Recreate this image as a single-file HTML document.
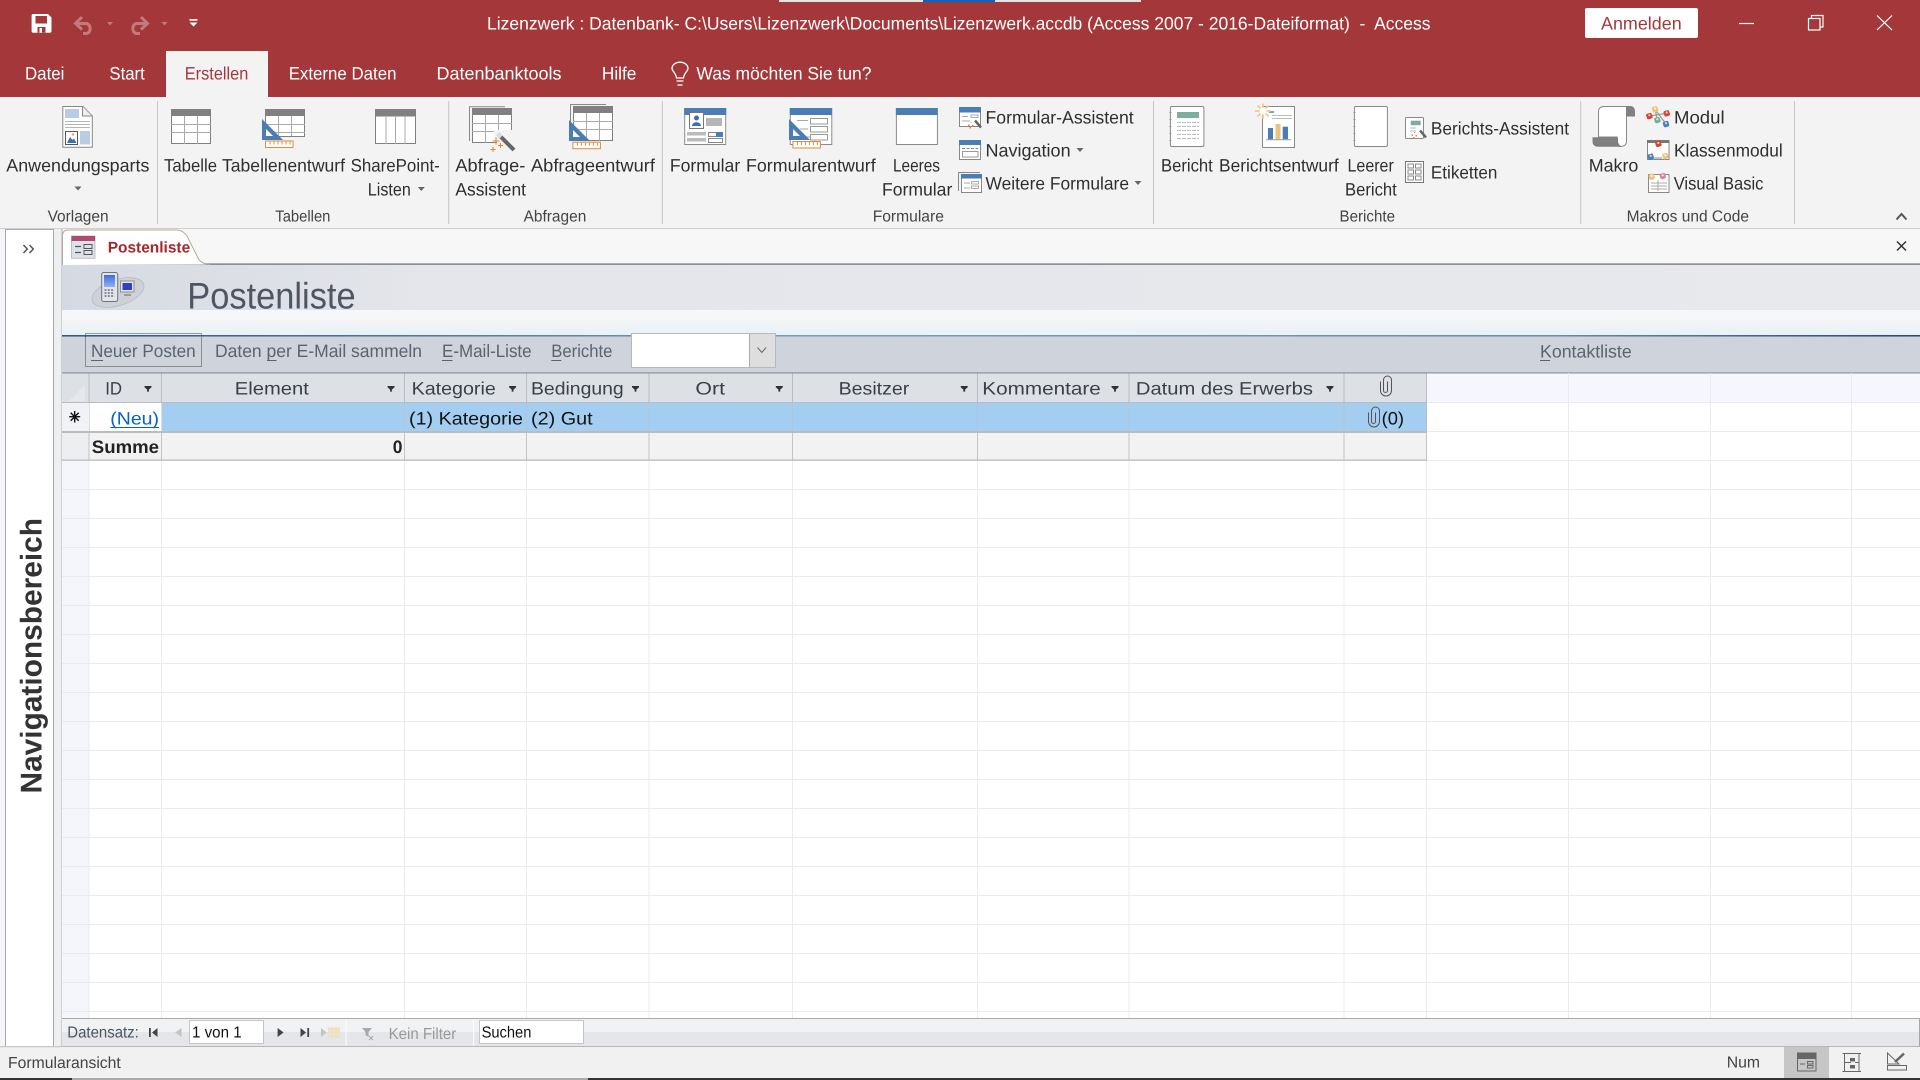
<!DOCTYPE html>
<html lang="de"><head><meta charset="utf-8"><title>Lizenzwerk</title>
<style>
html,body{margin:0;padding:0;background:#f3f3f3;width:1920px;height:1080px;overflow:hidden}
svg{display:block}
text{font-family:"Liberation Sans",sans-serif;text-rendering:geometricPrecision}
.w{fill:#fff;font-size:18px;transform:translateY(-.5px)}
.r{fill:#2e2e2e;font-size:18px;transform:translateY(-.5px)}
.g{fill:#444;font-size:16px;transform:translateY(-.5px)}
.t{fill:#5a6370;font-size:18px;transform:translateY(-.5px)}
.h{fill:#3a3f46;font-size:18px;transform:translateY(-.5px)}
.c{fill:#111;font-size:18px;transform:translateY(-.5px)}
</style></head><body>
<svg xmlns="http://www.w3.org/2000/svg" width="1920" height="1080" viewBox="0 0 1920 1080">
<defs>
<linearGradient id="hd" x1="0" x2="1" y1="0" y2="0"><stop offset="0" stop-color="#d5d9e1"/><stop offset=".2" stop-color="#e4e6eb"/><stop offset="1" stop-color="#e8e9ed"/></linearGradient>
<linearGradient id="bd" x1="0" x2="0" y1="0" y2="1"><stop offset="0" stop-color="#f3f4f6"/><stop offset="1" stop-color="#e8f2f8"/></linearGradient>
<linearGradient id="ln" x1="0" x2="1" y1="0" y2="0"><stop offset="0" stop-color="#2a5888"/><stop offset=".4" stop-color="#7e9aba"/><stop offset=".8" stop-color="#6e8aae"/><stop offset="1" stop-color="#1e4a80"/></linearGradient>
<linearGradient id="sc" x1="0" x2="0" y1="0" y2="1"><stop offset="0" stop-color="#3f6fe0"/><stop offset="1" stop-color="#8fb0f0"/></linearGradient>
<g id="f"><path d="M-3.500-2.500h7v1.300l-2.600 2.300v2h-1.800v-2l-2.600-2.300z" fill="#333"/></g>
<g id="a"><path d="M-3.500-2h7l-3.500 4z" fill="#666"/></g>
<g id="tri"><path d="M0 0V21H21Z" fill="#4a7db5"/><path d="M4 10V17H11Z" fill="#fff"/></g>
<g id="rul"><rect x=".5" y=".5" width="27.500" height="6.500" fill="#fff" stroke="#e08b3a"/><path d="M5 1v3M9 1v3M13 1v3M17 1v3M21 1v3M25 1v3" stroke="#e08b3a"/></g>
<g id="tb"><rect x=".5" y=".5" width="39" height="34" fill="#fff" stroke="#808080"/><rect width="40" height="7" fill="#808080"/><path d="M0 15.500H40M0 23.500H40M13.500 7V35M26.500 7V35" stroke="#aaa" fill="none"/></g>
<g id="cl"><path d="M1.500 6V15a5.500 5.500 0 0 0 11 0V4.500a4 4 0 0 0-8 0V15a2 2 0 0 0 4 0V6" fill="none" stroke="#555" stroke-width="1"/></g>
<g id="wd"><path d="M0 0L6 7" stroke="#666" stroke-width="2.500"/></g>
<g id="dot"><path d="M0 0h1v1h-1zM-2.500 2.500h1.500v1.500h-1.500zM1.500 3h1.500v1.500h-1.500zM-1 5h1.500v1.500h-1.500z" fill="#e8842c"/></g>
<g id="cu"><rect x="-2.900" y="-2.800" width="5.800" height="5.800" rx="1.700" transform="rotate(-18)" fill="currentColor"/><circle cx="0" cy="-.8" r="1.100" fill="#fff" opacity=".75"/></g>
</defs>

<!-- base -->
<rect width="1920" height="1080" fill="#f3f3f3"/>
<rect width="1920" height="97" fill="#a4373a"/>
<rect x="779" y="0" width="362" height="2" fill="#e2e2e2"/><rect x="923" y="0" width="72" height="2" fill="#0a66c2"/>

<!-- QAT -->
<path d="M33 14H48L51.500 17.500V31a1.700 1.700 0 0 1-1.700 1.700H33.300A1.700 1.700 0 0 1 31.600 31V15.500A1.500 1.500 0 0 1 33 14Z" fill="#fff"/>
<rect x="35.500" y="16" width="11.500" height="7.500" fill="#a4373a"/><rect x="37.500" y="27" width="8" height="5.700" fill="#a4373a"/><rect x="39.500" y="28" width="2.500" height="4.700" fill="#fff"/>
<g fill="none" stroke="#c27a7c" stroke-width="3"><path d="M82 17L75.500 23.500L82 29.500M76 23.500H87a5.500 5.500 0 0 1 0 10H83"/><path d="M141 17L147.500 23.500L141 29.500M147 23.500H136a5.500 5.500 0 0 0 0 10H140"/></g>
<path d="M107 22h6l-3 3.500zM161.500 22h6l-3 3.500z" fill="#c27a7c"/>
<rect x="189.500" y="19" width="8" height="1.700" fill="#fff"/><path d="M189.500 22.500h8l-4 4z" fill="#fff"/>

<!-- Title -->
<text class="w" x="487" y="30" textLength="943.500" lengthAdjust="spacingAndGlyphs" xml:space="preserve">Lizenzwerk : Datenbank- C:\Users\Lizenzwerk\Documents\Lizenzwerk.accdb (Access 2007 - 2016-Dateiformat)  -  Access</text>
<rect x="1585" y="8" width="113" height="30" rx="2" fill="#fff"/>
<text x="1601" y="29.500" textLength="80.700" lengthAdjust="spacingAndGlyphs" style="font-size:18px;fill:#a4373a">Anmelden</text>
<g stroke="#fff" stroke-width="1.200" fill="none"><path d="M1739 23.500H1754"/><rect x="1808.500" y="18.500" width="11.500" height="11.500"/><path d="M1811.500 18V15.500H1823V27H1820.500"/><path d="M1877 15.500L1892 30M1892 15.500L1877 30"/></g>

<!-- Tabs -->
<rect x="166" y="51" width="102" height="46" fill="#f3f3f3"/>
<text class="w" x="25" y="80" textLength="39.400" lengthAdjust="spacingAndGlyphs">Datei</text>
<text class="w" x="109.400" y="80" textLength="35.400" lengthAdjust="spacingAndGlyphs">Start</text>
<text x="184.800" y="79.500" textLength="63.500" lengthAdjust="spacingAndGlyphs" style="font-size:18px;fill:#a4373a">Erstellen</text>
<text class="w" x="288.700" y="80" textLength="107.800" lengthAdjust="spacingAndGlyphs">Externe Daten</text>
<text class="w" x="436.500" y="80" textLength="125" lengthAdjust="spacingAndGlyphs">Datenbanktools</text>
<text class="w" x="601.900" y="80" textLength="34.500" lengthAdjust="spacingAndGlyphs">Hilfe</text>
<path d="M676.500 78C676 73 672 71 672 68.500a8 6.300 0 0 1 16 0C688 71 684 73 683.500 78ZM676.500 81H683.500M677.500 85H682.500" fill="none" stroke="#fff" stroke-width="1.300"/>
<text class="w" x="696.400" y="80" textLength="175.100" lengthAdjust="spacingAndGlyphs">Was möchten Sie tun?</text>

<!-- Ribbon separators -->
<path d="M157.500 101V224M448.700 101V224M662.300 101V224M1153.500 101V224M1580.700 101V224M1794.500 101V224" stroke="#c8c8c8" stroke-width="1.100"/>
<rect x="0" y="228" width="1920" height="1.500" fill="#d0d0d0"/>

<!-- Ribbon text -->
<text class="r" x="6.300" y="172" textLength="143.100" lengthAdjust="spacingAndGlyphs">Anwendungsparts</text>
<use href="#a" x="78" y="188.500"/>
<text class="r" x="164" y="172" textLength="53" lengthAdjust="spacingAndGlyphs">Tabelle</text>
<text class="r" x="222" y="172" textLength="123" lengthAdjust="spacingAndGlyphs">Tabellenentwurf</text>
<text class="r" x="350.600" y="172" textLength="89.200" lengthAdjust="spacingAndGlyphs">SharePoint-</text>
<text class="r" x="367.800" y="196" textLength="43" lengthAdjust="spacingAndGlyphs">Listen</text>
<use href="#a" x="421.300" y="189"/>
<text class="r" x="455.400" y="172" textLength="69.900" lengthAdjust="spacingAndGlyphs">Abfrage-</text>
<text class="r" x="455.400" y="196" textLength="70.600" lengthAdjust="spacingAndGlyphs">Assistent</text>
<text class="r" x="531" y="172" textLength="123.900" lengthAdjust="spacingAndGlyphs">Abfrageentwurf</text>
<text class="r" x="669.900" y="172" textLength="70.300" lengthAdjust="spacingAndGlyphs">Formular</text>
<text class="r" x="746" y="172" textLength="129.700" lengthAdjust="spacingAndGlyphs">Formularentwurf</text>
<text class="r" x="893" y="172" textLength="47" lengthAdjust="spacingAndGlyphs">Leeres</text>
<text class="r" x="882" y="196" textLength="70.300" lengthAdjust="spacingAndGlyphs">Formular</text>
<text class="r" x="985.500" y="124" textLength="148.200" lengthAdjust="spacingAndGlyphs">Formular-Assistent</text>
<text class="r" x="985.500" y="157" textLength="85.100" lengthAdjust="spacingAndGlyphs">Navigation</text>
<use href="#a" x="1080" y="150"/>
<text class="r" x="985.500" y="190" textLength="143.500" lengthAdjust="spacingAndGlyphs">Weitere Formulare</text>
<use href="#a" x="1138" y="183"/>
<text class="r" x="1161" y="172" textLength="51.800" lengthAdjust="spacingAndGlyphs">Bericht</text>
<text class="r" x="1219" y="172" textLength="119.700" lengthAdjust="spacingAndGlyphs">Berichtsentwurf</text>
<text class="r" x="1347.500" y="172" textLength="46.300" lengthAdjust="spacingAndGlyphs">Leerer</text>
<text class="r" x="1345" y="196" textLength="51.800" lengthAdjust="spacingAndGlyphs">Bericht</text>
<text class="r" x="1430.900" y="135" textLength="138.100" lengthAdjust="spacingAndGlyphs">Berichts-Assistent</text>
<text class="r" x="1430.900" y="179" textLength="66.500" lengthAdjust="spacingAndGlyphs">Etiketten</text>
<text class="r" x="1588.700" y="172" textLength="49.700" lengthAdjust="spacingAndGlyphs">Makro</text>
<text class="r" x="1674" y="124" textLength="50.600" lengthAdjust="spacingAndGlyphs">Modul</text>
<text class="r" x="1674" y="157" textLength="108.700" lengthAdjust="spacingAndGlyphs">Klassenmodul</text>
<text class="r" x="1673.700" y="190" textLength="89.700" lengthAdjust="spacingAndGlyphs">Visual Basic</text>
<text class="g" x="47.600" y="222" textLength="61" lengthAdjust="spacingAndGlyphs">Vorlagen</text>
<text class="g" x="275.300" y="222" textLength="55.100" lengthAdjust="spacingAndGlyphs">Tabellen</text>
<text class="g" x="523.600" y="222" textLength="62.700" lengthAdjust="spacingAndGlyphs">Abfragen</text>
<text class="g" x="872.700" y="222" textLength="71.200" lengthAdjust="spacingAndGlyphs">Formulare</text>
<text class="g" x="1339.500" y="222" textLength="55.500" lengthAdjust="spacingAndGlyphs">Berichte</text>
<text class="g" x="1626.600" y="222" textLength="122.400" lengthAdjust="spacingAndGlyphs">Makros und Code</text>
<path d="M1896.500 219.500L1901.500 214L1906.500 219.500" fill="none" stroke="#555" stroke-width="2"/>

<!-- Ribbon icons -->
<!-- Anwendungsparts -->
<path d="M62.800 106.500H83L92.300 116V147.300H62.800Z" fill="#fff" stroke="#888"/><path d="M82.500 106.500V116H92" fill="#eee" stroke="#888"/>
<rect x="65" y="109" width="14" height="9" fill="#b8cde4"/><path d="M65 121.500H90M65 124.500H90M65 127.500H90" stroke="#b5b5b5"/>
<rect x="80" y="131" width="10" height="13.500" fill="#b8cde4"/><rect x="65.500" y="131.500" width="12" height="13" fill="#fff" stroke="#555"/><path d="M67 143L70 137L72.500 140L74 138.500L76.500 143Z" fill="#3f6fa6"/><circle cx="73" cy="134.500" r="1.200" fill="#eba94f"/>
<!-- Tabelle -->
<use href="#tb" x="171" y="109"/>
<!-- Tabellenentwurf -->
<use href="#tb" x="265" y="109"/><rect x="264" y="137" width="42" height="8" fill="#f3f3f3"/><path d="M265.500 136.500H304.500" stroke="#808080"/>
<use href="#tri" x="262" y="119"/><use href="#rul" x="265" y="140.500"/>
<!-- SharePoint -->
<rect x="375.500" y="109.500" width="40" height="34" fill="#fff" stroke="#808080"/><rect x="375" y="109" width="41" height="7.500" fill="#808080"/><path d="M386 116V144M395.500 116V144M405 116V144" stroke="#aaa"/>
<!-- Abfrage-Assistent -->
<path d="M469.500 141V106.800H505" fill="none" stroke="#888"/><use href="#tb" x="472" y="108"/>
<rect x="494" y="130" width="20" height="14" fill="#f3f3f3"/><path d="M494 142.500H497" stroke="#808080"/>
<path d="M498 134L514 150" stroke="#666" stroke-width="4"/><path d="M498 134L501 137" stroke="#ddd" stroke-width="4"/>
<path d="M496 137.500v7M492.500 141h7M500.500 143v5M498 145.500h5M493 147v5M490.500 149.500h5" stroke="#e8842c"/>
<!-- Abfrageentwurf -->
<path d="M570.500 125V104.500H606" fill="none" stroke="#888"/><use href="#tb" x="573" y="106"/>
<use href="#tri" x="569" y="120"/><use href="#rul" x="572.400" y="141.700"/>
<!-- Formular -->
<rect x="684.700" y="108.500" width="41" height="36" fill="#fff" stroke="#8a8a8a"/><rect x="684.200" y="108" width="42" height="7" fill="#4a7db5"/>
<rect x="689.500" y="112.500" width="14" height="16" fill="#fff" stroke="#777"/><circle cx="696.500" cy="118" r="2.500" fill="#3f6fa6"/><path d="M692 126c0-5 9-5 9 0z" fill="#3f6fa6"/>
<rect x="706" y="118" width="16" height="8" fill="#b5b5b5"/><rect x="687" y="132" width="19" height="3.500" fill="#bbb"/><rect x="687" y="138" width="19" height="3.500" fill="#bbb"/>
<rect x="708.500" y="132.500" width="14" height="4" fill="#fff" stroke="#888"/><rect x="716" y="132" width="7" height="5" fill="#4a7db5"/><rect x="708.500" y="138.500" width="14" height="4" fill="#fff" stroke="#888"/>
<!-- Formularentwurf -->
<rect x="790.300" y="108.500" width="41.500" height="36" fill="#fff" stroke="#8a8a8a"/><rect x="789.800" y="108" width="42.200" height="7" fill="#4a7db5"/>
<path d="M797 120.500H808M800 129H808M806 137H812" stroke="#aaa"/><rect x="810.500" y="118.500" width="17" height="5.500" fill="#fff" stroke="#999"/><rect x="810.500" y="126.500" width="17" height="5.500" fill="#fff" stroke="#999"/><rect x="810.500" y="134.500" width="17" height="5.500" fill="#fff" stroke="#999"/>
<use href="#tri" x="789" y="119"/><use href="#rul" x="792.400" y="141"/>
<!-- Leeres -->
<rect x="896.400" y="108.500" width="41" height="36" fill="#fff" stroke="#8a8a8a"/><rect x="895.900" y="108" width="41.800" height="7" fill="#4a7db5"/>
<!-- Formular-Assistent small -->
<rect x="959.500" y="107.500" width="21" height="19" fill="#fff" stroke="#888"/><rect x="959" y="107" width="22" height="5.500" fill="#4a7db5"/>
<path d="M962 116.500H968M962 121H970" stroke="#aaa"/><rect x="971" y="115" width="7" height="2.500" fill="#fff" stroke="#999" stroke-width=".8"/>
<use href="#wd" x="975" y="120.500"/><use href="#dot" x="970.500" y="122"/>
<!-- Navigation small -->
<rect x="959.500" y="140.500" width="21" height="19" fill="#fff" stroke="#888"/><rect x="959" y="140" width="22" height="5" fill="#4a7db5"/>
<path d="M962 148.500H978" stroke="#888" stroke-dasharray="3 1.500"/><rect x="962.500" y="151.500" width="15.500" height="5.500" fill="#fff" stroke="#999"/>
<!-- Weitere small -->
<path d="M958.500 191V172.500H980" fill="none" stroke="#888"/><rect x="961.500" y="174.500" width="20" height="18" fill="#fff" stroke="#888"/><rect x="961" y="174" width="21" height="4.500" fill="#4a7db5"/>
<path d="M964 183H970M964 188H970" stroke="#aaa"/><rect x="971.500" y="181.500" width="7" height="2.500" fill="#fff" stroke="#999" stroke-width=".8"/><rect x="971.500" y="186" width="7" height="2.500" fill="#fff" stroke="#999" stroke-width=".8"/>
<!-- Bericht -->
<rect x="1170.400" y="106.500" width="33.500" height="40" rx="1.500" fill="#fff" stroke="#888"/><rect x="1177" y="112" width="22" height="6" fill="#7fad9c"/>
<path d="M1177 122.500H1199M1177 126.500H1199M1177 130.500H1199M1177 134.500H1199M1177 138.500H1199" stroke="#bbb" stroke-dasharray="4 1"/>
<path d="M1170.500 112v.5M1170.500 119v.5M1170.500 126v.5M1170.500 133v.5M1170.500 140v.5" stroke="#999" stroke-width="3"/>
<!-- Berichtsentwurf -->
<rect x="1262.500" y="106.500" width="32" height="41" fill="#fff" stroke="#888"/>
<path d="M1269 112H1274" stroke="#4a7db5" stroke-width="1.500"/><path d="M1272 115.500H1292M1272 118.500H1292" stroke="#bbb"/>
<rect x="1268" y="128" width="5" height="11.300" fill="#4a7db5"/><rect x="1275.500" y="124" width="5" height="15.300" fill="#eac37e"/><rect x="1282.700" y="126.700" width="5.300" height="12.600" fill="#4a7db5"/><path d="M1266 139.700H1291" stroke="#999"/>
<path d="M1263 103.500V119M1255 111H1271M1257.500 105.500L1268.500 116.500M1268.500 105.500L1257.500 116.500" stroke="#efc98f" stroke-width="1.700"/><circle cx="1263" cy="111" r="3.500" fill="#fff"/>
<!-- Leerer -->
<rect x="1354.400" y="106.500" width="33" height="40" rx="1.500" fill="#fff" stroke="#888"/>
<path d="M1354.500 112v.5M1354.500 119v.5M1354.500 126v.5M1354.500 133v.5M1354.500 140v.5" stroke="#999" stroke-width="3"/>
<!-- Berichts-Assistent -->
<rect x="1405.500" y="117.500" width="18" height="21" rx="1" fill="#fff" stroke="#888"/><rect x="1410.700" y="120.700" width="10" height="4.500" fill="#7fad9c"/><path d="M1410 128H1416M1410 131H1416" stroke="#bbb"/>
<use href="#wd" x="1420" y="130.500"/><use href="#dot" x="1414" y="132"/>
<!-- Etiketten -->
<rect x="1405.500" y="161.500" width="18" height="21" fill="#fff" stroke="#777"/>
<g fill="none" stroke="#888"><rect x="1408" y="164" width="5.500" height="4"/><rect x="1415.500" y="164" width="5.500" height="4"/><rect x="1408" y="170" width="5.500" height="4"/><rect x="1415.500" y="170" width="5.500" height="4"/><rect x="1408" y="176" width="5.500" height="4"/><rect x="1415.500" y="176" width="5.500" height="4"/></g>
<!-- Makro -->
<path d="M1598.500 137V112Q1598.500 106.500 1604 106.500H1631Q1626.500 106.500 1626.500 112V141Q1626.500 146.500 1620 146.500Q1618.500 146.500 1617 146V137Z" fill="#fff" stroke="#888"/>
<path d="M1626 106H1630Q1635 106 1635 112V116.500H1626Z" fill="#808080"/>
<path d="M1592.500 137.300H1618V141Q1618 145 1622 146.700H1598Q1592.500 146.700 1592.500 141Z" fill="#808080"/>
<!-- Modul -->
<path d="M1655 109.300L1666 124M1649.300 116L1666.700 113.300M1657.300 120L1655 109.300" stroke="#999" stroke-width="1.200"/>
<use href="#cu" x="1655" y="109.300" color="#eac37e"/><use href="#cu" x="1649.300" y="116" color="#d8432c"/><use href="#cu" x="1666.700" y="113.300" color="#d8432c"/><use href="#cu" x="1657.300" y="120" color="#6fb29a"/><use href="#cu" x="1666" y="124" color="#4a7db5"/>
<!-- Klassen -->
<rect x="1647.500" y="140.500" width="21.500" height="19" fill="#fff" stroke="#888"/><rect x="1647" y="140" width="22.500" height="3" fill="#777"/><path d="M1654 158H1662" stroke="#888"/>
<use href="#cu" x="1658.300" y="143.800" color="#d8432c"/><use href="#cu" x="1650.700" y="156.700" color="#4a7db5"/><use href="#cu" x="1665.300" y="156" color="#eac37e"/>
<!-- VB -->
<rect x="1648.500" y="174.500" width="20.500" height="18" fill="#fff" stroke="#888"/><path d="M1651 183H1667M1651 186H1667M1651 189H1667M1658 180V191" stroke="#aaa"/>
<use href="#cu" x="1651.700" y="176.700" color="#eac37e"/><use href="#cu" x="1662.700" y="176" color="#e87ea0"/>

<!-- Tab strip -->
<rect x="0" y="229" width="1920" height="851" fill="#f7f7f7"/>
<rect x="0" y="229" width="5" height="820" fill="#f5f5f7"/>
<rect x="5.500" y="229.500" width="48" height="817" fill="#fff" stroke="#a8a8b0"/>
<rect x="54" y="229" width="8" height="819" fill="#eeeff1"/><rect x="61.500" y="229" width="1" height="819" fill="#a9acb4"/>
<path d="M23.500 245l3.800 4-3.800 4M29.500 245l3.800 4-3.800 4" fill="none" stroke="#555" stroke-width="1.500"/>
<text x="0" y="0" transform="translate(41.500 793.500) rotate(-90)" textLength="275.500" lengthAdjust="spacingAndGlyphs" style="font-size:30px;font-weight:700;fill:#333">Navigationsbereich</text>

<rect x="62" y="263.300" width="1858" height="2" fill="#8f8f93"/>
<path d="M62.500 265V236Q62.500 230 68 230H176Q185 230 189 240L198 258Q201 264 210 264.500" fill="#fff" stroke="#b7ab98"/>
<rect x="71.500" y="236" width="23.500" height="22.300" fill="#dde2ea" stroke="#aeb4bd" stroke-width=".8"/><rect x="71.500" y="236" width="23.500" height="5" fill="#b04a6c"/>
<path d="M75 246.500H81M75 252.500H81" stroke="#555" stroke-width="1.200"/><rect x="84" y="244.500" width="8" height="4" fill="none" stroke="#555"/><rect x="84" y="250.500" width="8" height="4" fill="none" stroke="#555"/>
<text x="107.700" y="252.700" textLength="82.500" lengthAdjust="spacingAndGlyphs" style="font-size:15.500px;font-weight:700;fill:#a4272a">Postenliste</text>
<path d="M1897 241.500L1906 250.500M1906 241.500L1897 250.500" stroke="#333" stroke-width="1.500"/>

<!-- Form header -->
<rect x="62" y="265" width="1858" height="45" fill="url(#hd)"/>
<rect x="62" y="310" width="1858" height="10" fill="#f6f7f9"/>
<rect x="62" y="320" width="1858" height="15" fill="url(#bd)"/>
<rect x="62" y="335" width="1858" height="1.700" fill="url(#ln)"/>
<ellipse cx="118" cy="292.500" rx="27" ry="13" transform="rotate(-18 118 292.500)" fill="#ced1d7" stroke="#b5b8be" stroke-width=".7"/>
<rect x="101.700" y="272.500" width="16" height="29" rx="2" fill="#e3e5e9" stroke="#6c7380"/><rect x="104" y="275" width="11" height="12" fill="url(#sc)"/><path d="M104.500 290h10M104.500 293h10M104.500 296h10" stroke="#6a7078" stroke-width="1.500" stroke-dasharray="2 1.300"/>
<rect x="120.500" y="281" width="13.500" height="11" fill="#e6e6e6" stroke="#8a8e95"/><rect x="122.500" y="283" width="9.500" height="7" fill="#2f3fc8"/><path d="M124 295h7" stroke="#888" stroke-width="1.500"/>
<text x="187.300" y="308.300" textLength="168.300" lengthAdjust="spacingAndGlyphs" style="font-size:37px;fill:#4d5663">Postenliste</text>
<rect x="62" y="310" width="300" height="10" fill="#f6f7f9"/>

<!-- Toolbar -->
<rect x="62" y="336.700" width="1858" height="36" fill="#cfd3db"/>
<rect x="62" y="372.300" width="1858" height="1.300" fill="#8f92a0"/>
<rect x="85.500" y="333.500" width="116" height="33" fill="none" stroke="#444" stroke-dasharray="1 1"/>
<text class="t" x="91" y="357.700" textLength="104.700" lengthAdjust="spacingAndGlyphs">Neuer Posten</text><rect x="91" y="360" width="12" height="1" fill="#5a6370"/>
<text class="t" x="215" y="357.700" textLength="207" lengthAdjust="spacingAndGlyphs">Daten per E-Mail sammeln</text><rect x="267" y="360" width="9.500" height="1" fill="#5a6370"/>
<text class="t" x="442" y="357.700" textLength="89.600" lengthAdjust="spacingAndGlyphs">E-Mail-Liste</text><rect x="442" y="360" width="10.500" height="1" fill="#5a6370"/>
<text class="t" x="551.300" y="357.700" textLength="61.100" lengthAdjust="spacingAndGlyphs">Berichte</text><rect x="551.300" y="360" width="10" height="1" fill="#5a6370"/>
<rect x="631.500" y="333.500" width="144" height="34" fill="#fff" stroke="#b4b8c0"/>
<rect x="749" y="334" width="26" height="33" fill="#dedede"/><rect x="749" y="334" width="1" height="33" fill="#aaa"/>
<path d="M757.500 347.500l4.300 5 4.300-5" fill="none" stroke="#666"/>
<text class="t" x="1540" y="358" textLength="91.700" lengthAdjust="spacingAndGlyphs">Kontaktliste</text><rect x="1540" y="360" width="10" height="1" fill="#5a6370"/>

<!-- Grid -->
<rect x="62" y="373.500" width="1858" height="645" fill="#fff"/>
<rect x="62" y="460" width="27" height="558" fill="#f4f6fc"/>
<rect x="1426.500" y="373.500" width="493.500" height="29" fill="#f6f7fe"/>
<path d="M62 489.500H1920M62 518.500H1920M62 547.500H1920M62 576.500H1920M62 605.500H1920M62 634.500H1920M62 663.500H1920M62 692.500H1920M62 721.500H1920M62 750.500H1920M62 779.500H1920M62 808.500H1920M62 837.500H1920M62 866.500H1920M62 895.500H1920M62 924.500H1920M62 953.500H1920M62 982.500H1920M62 1011.500H1920M1427 402.500H1920M1427 431.500H1920M1427 460.500H1920" stroke="#ebebeb"/>
<path d="M89 460V1018M161.500 460V1018M404.500 460V1018M526.500 460V1018M649 460V1018M792.500 460V1018M977.500 460V1018M1129 460V1018M1344 460V1018M1426.500 460V1018M1568.500 373V1018M1710.500 373V1018M1851.500 373V1018" stroke="#ebebeb"/>

<!-- Header row -->
<rect x="62" y="373.500" width="1364.500" height="29" fill="#dde0e5"/>
<path d="M69 401L85 385V401Z" fill="#e6e8ec"/>
<path d="M89 373.500V460M161.500 373.500V460M404.500 373.500V460M526.500 373.500V460M649 373.500V460M792.500 373.500V460M977.500 373.500V460M1129 373.500V460M1344 373.500V460M1426.500 373.500V460" stroke="#b9bcc1" fill="none"/>
<rect x="62" y="402" width="1364.500" height="1" fill="#b9bcc1"/>
<text class="h" x="105.200" y="395" textLength="16.800" lengthAdjust="spacingAndGlyphs">ID</text><use href="#f" x="148" y="388.500"/>
<text class="h" x="234.800" y="395" textLength="74.100" lengthAdjust="spacingAndGlyphs">Element</text><use href="#f" x="391" y="388.500"/>
<text class="h" x="411.600" y="395" textLength="84.200" lengthAdjust="spacingAndGlyphs">Kategorie</text><use href="#f" x="512.600" y="388.500"/>
<text class="h" x="531" y="395" textLength="92.700" lengthAdjust="spacingAndGlyphs">Bedingung</text><use href="#f" x="635.500" y="388.500"/>
<text class="h" x="695.400" y="395" textLength="29.600" lengthAdjust="spacingAndGlyphs">Ort</text><use href="#f" x="779.300" y="388.500"/>
<text class="h" x="838.600" y="395" textLength="70.700" lengthAdjust="spacingAndGlyphs">Besitzer</text><use href="#f" x="964.200" y="388.500"/>
<text class="h" x="982.300" y="395" textLength="118.500" lengthAdjust="spacingAndGlyphs">Kommentare</text><use href="#f" x="1115" y="388.500"/>
<text class="h" x="1135.900" y="395" textLength="177.100" lengthAdjust="spacingAndGlyphs">Datum des Erwerbs</text><use href="#f" x="1330" y="388.500"/>
<use href="#cl" x="1379" y="375.500"/>

<!-- New row -->
<rect x="162" y="403" width="1264" height="28" fill="#a3cef1"/>
<rect x="62" y="403" width="27" height="28" fill="#f1f2f6"/>
<rect x="89.500" y="403" width="72" height="28" fill="#fff"/>
<path d="M404.500 403V431M526.500 403V431M649 403V431M792.500 403V431M977.500 403V431M1129 403V431M1344 403V431" stroke="#b4c4d2" fill="none"/>
<path d="M74.700 411V422.500M69.200 416.700H80.200M70.700 412.700L78.700 420.800M78.700 412.700L70.700 420.800" stroke="#111" stroke-width="1.400"/>
<text x="110.300" y="424.500" textLength="48.700" lengthAdjust="spacingAndGlyphs" style="font-size:18px;fill:#0563c1">(Neu)</text><rect x="110.300" y="427" width="48.700" height="1" fill="#0563c1"/>
<text class="c" x="409" y="425" textLength="114" lengthAdjust="spacingAndGlyphs">(1) Kategorie</text>
<text class="c" x="531" y="425" textLength="61.600" lengthAdjust="spacingAndGlyphs">(2) Gut</text>
<use href="#cl" x="1367" y="406.500"/>
<text class="c" x="1381.600" y="425" textLength="22.400" lengthAdjust="spacingAndGlyphs">(0)</text>

<!-- Totals row -->
<rect x="62" y="431" width="1364.500" height="2" fill="#bcbcbc"/>
<rect x="62" y="433" width="1364.500" height="27" fill="#f2f2f2"/>
<rect x="62" y="433" width="27" height="27" fill="#eceef0"/>
<path d="M89 433V460M161.500 433V460M404.500 433V460M526.500 433V460M649 433V460M792.500 433V460M977.500 433V460M1129 433V460M1344 433V460M1426.500 433V460" stroke="#c4c4c4" fill="none"/>
<rect x="62" y="459.500" width="1365" height="1.300" fill="#bcbcbc"/>
<text x="91.800" y="453" textLength="67.200" lengthAdjust="spacingAndGlyphs" style="font-size:18px;font-weight:700;fill:#222">Summe</text>
<text x="392.700" y="453" textLength="9.700" lengthAdjust="spacingAndGlyphs" style="font-size:18px;font-weight:700;fill:#222">0</text>

<!-- Record nav -->
<rect x="62" y="1018" width="1858" height="14" fill="#f1f2f4"/>
<rect x="62" y="1032" width="1858" height="14" fill="#e5e6ea"/>
<rect x="62" y="1018" width="1858" height="1" fill="#a8a8a8"/>
<rect x="62" y="1046" width="1858" height="1.300" fill="#b5b5b5"/>
<rect x="1919" y="1018" width="1" height="29" fill="#a8a8a8"/>
<text x="67.300" y="1037.700" textLength="71.500" lengthAdjust="spacingAndGlyphs" style="font-size:16px;fill:#4a5564">Datensatz:</text>
<path d="M149 1028h1.800v9H149zM157.500 1028v9l-5.500-4.500z" fill="#444"/>
<path d="M181.600 1028v9l-6.500-4.500z" fill="#c4c4c4"/>
<rect x="189.500" y="1020.500" width="74" height="23" fill="#fff" stroke="#c4c6ca"/>
<text x="192" y="1037.700" textLength="49.600" lengthAdjust="spacingAndGlyphs" style="font-size:16px;fill:#111">1 von 1</text>
<path d="M277.600 1028v9l6 -4.500z" fill="#444"/>
<path d="M300.500 1028v9l5.500-4.500zM307.300 1028h1.800v9h-1.800z" fill="#444"/>
<path d="M321 1028v9l5.500-4.500z" fill="#c4c4c4"/><rect x="328" y="1027.500" width="12" height="10" fill="#f0dfaf"/><path d="M330 1027.500v10M334 1027.500v10M338 1027.500v10M328 1031h12M328 1034.500h12" stroke="#e8e8e8" stroke-width=".8"/>
<rect x="345.500" y="1019" width="1.200" height="27" fill="#fbfbfb"/><rect x="473" y="1019" width="1.200" height="27" fill="#fbfbfb"/>
<path d="M362 1028H372L368.500 1032V1037L365.500 1035V1032Z" fill="#a9a9a9"/><path d="M369 1036l4 4M373 1036l-4 4" stroke="#a9a9a9"/>
<text x="388.600" y="1039" textLength="67.700" lengthAdjust="spacingAndGlyphs" style="font-size:16px;fill:#9a9a9a">Kein Filter</text>
<rect x="479.500" y="1020.500" width="104" height="23" fill="#fff" stroke="#c4c6ca"/>
<text x="481.600" y="1037.700" textLength="49.800" lengthAdjust="spacingAndGlyphs" style="font-size:16px;fill:#111">Suchen</text>

<!-- Status bar -->
<rect x="0" y="1047" width="1920" height="31" fill="#f1f1f1"/>
<rect x="0" y="1046" width="62" height="1.300" fill="#c8c8c8"/>
<text x="8" y="1068" textLength="112.800" lengthAdjust="spacingAndGlyphs" style="font-size:16px;fill:#444">Formularansicht</text>
<text x="1726.700" y="1067.700" textLength="33.300" lengthAdjust="spacingAndGlyphs" style="font-size:16px;fill:#444">Num</text>
<rect x="1784" y="1047" width="45" height="31" fill="#c6c6c6"/>
<rect x="1797.500" y="1053" width="18.500" height="18" fill="none" stroke="#666"/><rect x="1797" y="1053" width="19" height="6" fill="#666"/>
<path d="M1800 1064H1805" stroke="#666"/><rect x="1807.500" y="1061.500" width="5.500" height="2.500" fill="none" stroke="#666"/><rect x="1807.500" y="1065.500" width="5.500" height="2.500" fill="none" stroke="#666"/>
<path d="M1844.500 1053V1071.500M1859 1053V1071.500M1842.500 1053.500H1861M1842.500 1071.500H1861M1845 1062.500H1851M1855 1062.500H1859" stroke="#666" fill="none"/><rect x="1850" y="1058" width="5" height="3.500" fill="#666"/><rect x="1850" y="1065" width="5" height="3.500" fill="#666"/>
<path d="M1887.500 1053V1064H1899Z" fill="none" stroke="#666"/><path d="M1895 1062L1904 1053.500" stroke="#666" stroke-width="2.500"/><rect x="1887.500" y="1065.500" width="19" height="4.500" fill="none" stroke="#666"/>
<rect x="0" y="1078" width="72" height="2" fill="#333"/><rect x="72" y="1078" width="516" height="2" fill="#aaa"/><rect x="588" y="1078" width="1332" height="2" fill="#333"/>
</svg>
</body></html>
